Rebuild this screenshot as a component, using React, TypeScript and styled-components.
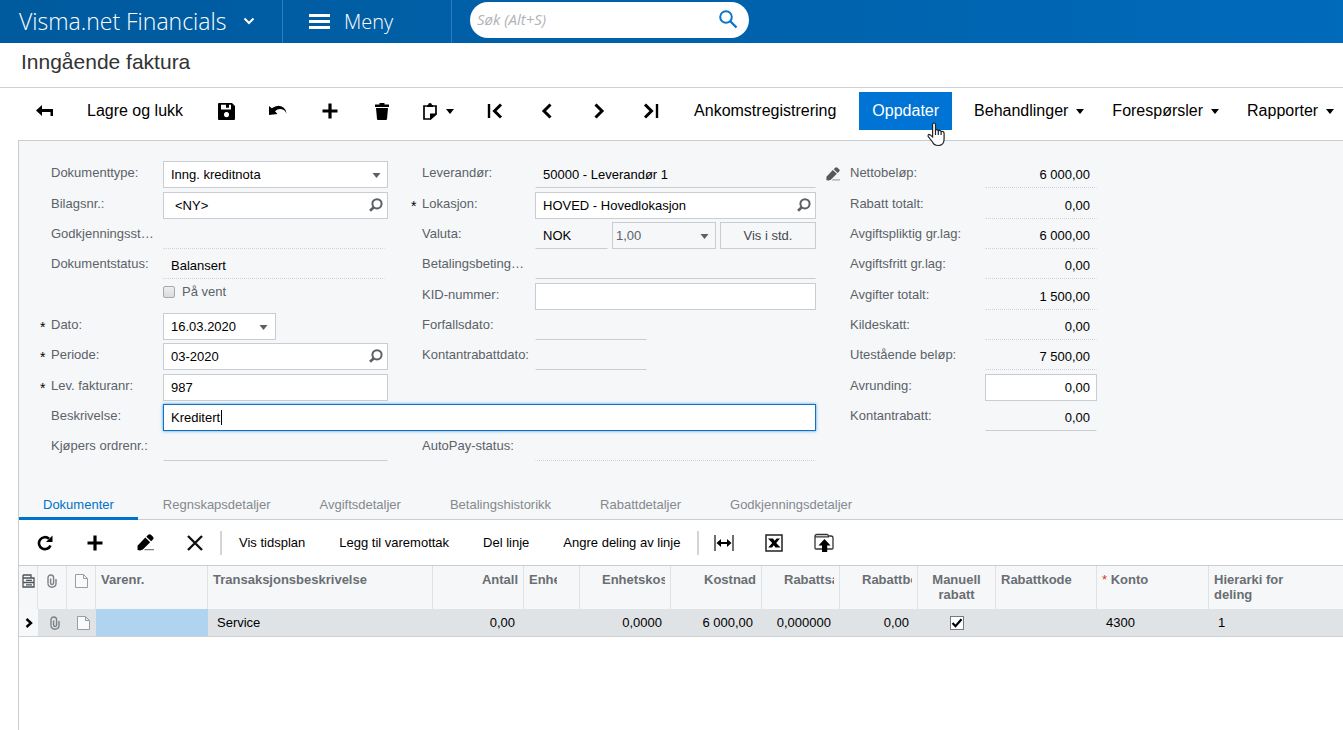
import React from "react";
import styled, { createGlobalStyle, css } from "styled-components";

const GlobalStyle = createGlobalStyle`
  *, *::before, *::after { box-sizing: border-box; }
  body {
    margin: 0;
    background: #fff;
    color: #000;
    font: 13px/16px "Liberation Sans", Arial, sans-serif;
    overflow: hidden;
  }
  button, input, select { font: inherit; color: inherit; margin: 0; border-radius: 0; }
  button { background: none; border: 0; padding: 0; white-space: nowrap; }
  svg { display: block; flex: none; }
`;

const Page = styled.div`
  min-height: 100vh;
  display: flex;
  flex-direction: column;
`;

/* ---------- top bar ---------- */

const TopBar = styled.header`
  height: 43px;
  flex: none;
  display: flex;
  align-items: stretch;
  background: linear-gradient(90deg, #005a9e, #0061aa 50%, #006abb);
  color: #fff;
  font-family: "Open Sans", sans-serif;
  font-weight: 300;
`;

const BrandButton = styled.button`
  width: 283px;
  padding: 0 27px 2px 19px;
  display: flex;
  align-items: center;
  justify-content: space-between;
  border-right: 1px solid #2b7dbd;
  font-size: 23px;
`;

const MenuButton = styled.button`
  width: 169px;
  padding: 0 0 0 26px;
  display: flex;
  align-items: center;
  gap: 14px;
  border-right: 1px solid #2b7dbd;
  font-size: 20px;
`;

const SearchBox = styled.div`
  width: 279px;
  height: 36px;
  margin: 2px 0 0 18px;
  padding: 0 11px 2px 7px;
  display: flex;
  align-items: center;
  background: #fff;
  border-radius: 18px;
  color: #0a73cf;
`;

const SearchInput = styled.input`
  flex: 1;
  min-width: 0;
  border: 0;
  outline: 0;
  padding: 0;
  background: none;
  font: italic 400 15px/20px "Open Sans", sans-serif;
  &::placeholder { color: #b0b3b7; opacity: 1; }
`;

const PageTitle = styled.h1`
  margin: 0;
  height: 45px;
  flex: none;
  padding: 0 21px 6px;
  border-bottom: 1px solid #cfd1d4;
  display: flex;
  align-items: center;
  font-size: 21px;
  font-weight: 400;
  color: #333;
`;

/* ---------- main toolbar ---------- */

const Toolbar = styled.div`
  height: 52px;
  flex: none;
  padding: 0 0 6px 18px;
  display: flex;
  align-items: center;
  font-size: 16px;
`;

const ToolIcon = styled.button<{ $wide?: boolean }>`
  width: ${(p) => (p.$wide ? 61 : 52)}px;
  height: 38px;
  flex: none;
  display: flex;
  align-items: center;
  justify-content: center;
  gap: 9px;
`;

const ToolText = styled.button<{ $active?: boolean }>`
  position: relative;
  height: 38px;
  padding: 0 ${(p) => (p.$active ? 13 : 17)}px;
  ${(p) =>
    p.$active &&
    css`
      margin: 0 8px 0 6px;
      background: #0074d4;
      color: #fff;
    `}
`;

const ToolMenu = styled.button`
  height: 38px;
  padding: 0 14px;
  display: flex;
  align-items: center;
  gap: 8px;
`;

const Pointer = styled.svg`
  position: absolute;
  left: 68px;
  top: 30px;
  z-index: 2;
`;

/* ---------- form ---------- */

const Workspace = styled.main`
  flex: 1;
  margin-left: 18px;
  border: solid #c9ccd0;
  border-width: 1px 0 0 1px;
  display: flex;
  flex-direction: column;
`;

const Form = styled.form`
  flex: none;
  padding: 20px 0 23px 16px;
  background: #f5f7f9;
  display: grid;
  grid-template-columns: 128px 225px 18px 129px 281px 34px 135px 112px;
  grid-template-rows: repeat(3, 31px 30px 30px) 31px;
  align-items: start;
`;

const FieldLabel = styled.label<{ $col: number; $row: number; $plain?: boolean }>`
  grid-column: ${(p) => p.$col};
  grid-row: ${(p) => p.$row};
  padding-left: ${(p) => (p.$plain ? 0 : 16)}px;
  padding-right: 4px;
  position: relative;
  line-height: 24px;
  color: #5c6268;
  white-space: nowrap;
`;

const Clip = styled.span`
  display: block;
  overflow: hidden;
  text-overflow: ellipsis;
`;

const Required = styled.span`
  position: absolute;
  left: 5px;
  top: 2px;
  color: #000;
  font-size: 14px;
`;

const Slot = styled.div<{ $col: number; $row: number; $span?: number; $w?: number }>`
  grid-column: ${(p) => p.$col} / span ${(p) => p.$span || 1};
  grid-row: ${(p) => p.$row};
  position: relative;
  display: flex;
  width: ${(p) => (p.$w ? p.$w + "px" : "100%")};
`;

type Look = "box" | "line" | "dots" | "focus";

const looks = {
  box: css`
    background: #fff;
    border: 1px solid #c9cdd1;
  `,
  line: css`
    background: none;
    border: 1px solid transparent;
    border-bottom-color: #c9cdd1;
  `,
  dots: css`
    background: none;
    border: 1px solid transparent;
    border-bottom: 1px dotted #cfd3d7;
  `,
  focus: css`
    background: #fff;
    border: 1px solid #1270bf;
    box-shadow: 0 0 3px #3d9fe6;
  `,
};

const TextInput = styled.input<{ $look: Look; $right?: boolean; $indent?: boolean }>`
  width: 100%;
  min-width: 0;
  height: 27px;
  outline: 0;
  padding: 0 ${(p) => (p.$right ? 6 : 7)}px 0 ${(p) => (p.$indent ? 11 : 7)}px;
  text-align: ${(p) => (p.$right ? "right" : "left")};
  ${(p) => looks[p.$look]}
`;

const Dropdown = styled.select<{ $muted?: boolean }>`
  width: 100%;
  height: 27px;
  padding: 0 20px 0 ${(p) => (p.$muted ? 3 : 7)}px;
  border: 1px solid #c9cdd1;
  background: ${(p) => (p.$muted ? "#f5f7f9" : "#fff")};
  color: ${(p) => (p.$muted ? "#5c6268" : "#000")};
  appearance: none;
  outline: 0;
`;

const InnerButton = styled.button`
  position: absolute;
  right: 5px;
  top: 6px;
  color: #5c5f63;
`;

const ArrowMark = styled.span`
  position: absolute;
  right: 7px;
  top: 12px;
  color: #5c5f63;
  pointer-events: none;
`;

const DateArrow = styled.button`
  position: absolute;
  right: 8px;
  top: 12px;
  color: #5c5f63;
`;

const Caret = styled.span`
  position: absolute;
  left: 58px;
  top: 6px;
  width: 1px;
  height: 15px;
  background: #000;
`;

const CurrencyRow = styled.div`
  grid-column: 5;
  grid-row: 3;
  display: grid;
  grid-template-columns: 73px 104px 1fr;
  gap: 4px;
`;

const Holder = styled.div`
  position: relative;
`;

const StdButton = styled.button`
  height: 27px;
  border: 1px solid #c9cdd1;
  color: #43484d;
`;

const HoldLabel = styled.label`
  grid-column: 2;
  grid-row: 5;
  display: flex;
  align-items: center;
  gap: 7px;
  height: 17px;
  color: #5c6268;
`;

const HoldBox = styled.input`
  appearance: none;
  width: 12px;
  height: 12px;
  border: 1px solid #a6a9ad;
  border-radius: 2px;
  background: linear-gradient(#eee, #d8dadc);
`;

const EditButton = styled.button`
  grid-column: 6;
  grid-row: 1;
  padding: 6px 0 0 10px;
  color: #55585c;
`;

/* ---------- tabs and grid toolbar ---------- */

const Tabs = styled.div`
  flex: none;
  height: 32px;
  display: flex;
  gap: 1px;
  background: #f5f7f9;
  border-bottom: 1px solid #c9ccd0;
`;

const Tab = styled.button<{ $active?: boolean }>`
  height: 32px;
  padding: 5px 24px 0;
  border-bottom: 3px solid ${(p) => (p.$active ? "#0072c8" : "transparent")};
  color: ${(p) => (p.$active ? "#0072c8" : "#85898d")};
`;

const GridBar = styled.div`
  flex: none;
  height: 45px;
  padding-left: 1px;
  display: flex;
  align-items: center;
`;

const GridIcon = styled.button`
  width: 50px;
  height: 30px;
  flex: none;
  display: flex;
  align-items: center;
  justify-content: center;
`;

const GridText = styled.button`
  height: 30px;
  padding: 0 17px;
`;

const Divider = styled.span`
  width: 2px;
  height: 24px;
  background: #d2d5d8;
`;

/* ---------- table ---------- */

const Table = styled.table`
  width: 100%;
  min-width: 1300px;
  table-layout: fixed;
  border-collapse: separate;
  border-spacing: 0;
  border-top: 1px solid #c9ccd0;
`;

type Align = "left" | "right" | "center";

const Th = styled.th<{ $align?: Align; $icon?: boolean; $inset?: Align }>`
  height: 43px;
  padding: ${(p) => (p.$icon ? "8px 0 0" : "6px 5px 0")};
  ${(p) => p.$inset === "left" && "padding-left: 22px;"}
  ${(p) => p.$inset === "right" && "padding-right: 22px;"}
  vertical-align: top;
  text-align: ${(p) => p.$align || "left"};
  line-height: 15px;
  background: #f5f7f9;
  border-right: 1px solid #dfe2e5;
  color: #6a6e72;
  &:last-child { border-right: 0; }
`;

const HeadText = styled.span`
  display: block;
  overflow: hidden;
  white-space: nowrap;
`;

const Star = styled.span`
  color: #e2352b;
  font-weight: 400;
`;

const Td = styled.td<{ $align?: Align; $tone?: "plain" | "selected"; $icon?: boolean }>`
  height: 28px;
  padding: ${(p) => (p.$icon ? "0" : "0 9px")};
  text-align: ${(p) => p.$align || "left"};
  white-space: nowrap;
  background: ${(p) =>
    p.$tone === "selected" ? "#b0d4f0" : p.$tone === "plain" ? "#f7f8fa" : "#dfe3e6"};
  border-bottom: 1px solid #cfd2d5;
`;

const CellIcon = styled.span<{ $row?: boolean }>`
  display: flex;
  justify-content: center;
  padding-left: ${(p) => (p.$row ? 4 : 0)}px;
`;

const RowCheck = styled.input`
  appearance: none;
  display: block;
  width: 14px;
  height: 14px;
  margin: 0 auto;
  border: 1px solid #75787c;
  background: #fff
    url("data:image/svg+xml,%3Csvg xmlns='http://www.w3.org/2000/svg' viewBox='0 0 12 12'%3E%3Cpath d='M1.500 6l3 3.200 6-7' fill='none' stroke='%23000' stroke-width='2.200'/%3E%3C/svg%3E");
`;

/* ---------- icons ---------- */

const Down = ({ w = 8 }: { w?: number }) => (
  <svg width={w} height="5" viewBox="0 0 8 5" fill="currentColor"><path d="M0 0h8L4 5z" /></svg>
);

const Lens = () => (
  <svg width="14" height="14" viewBox="0 0 14 14" fill="none" stroke="currentColor">
    <circle cx="8" cy="5.8" r="4.6" strokeWidth="2" />
    <path d="M4.800 9.200L1 12.800" strokeWidth="2.6" />
  </svg>
);

const Pencil = ({ size = 14 }: { size?: number }) => (
  <svg width={size} height={size} viewBox="0 0 16 16" fill="currentColor">
    <path d="M.5 15V11L7.800 3.400l4.600 4.400L5.500 14.500 3 15.500z M8.800 2.500L10.500.8q1.300-1.200 2.600 0l1.900 1.900q1.200 1.200 0 2.500L13.300 6.900z" />
    <path d="M7.500 14h8.500v1.400H6.500z" opacity=".5" />
  </svg>
);

const Plus = () => (
  <svg width="16" height="16" viewBox="0 0 16 16"><path d="M8 .5v15M.5 8h15" stroke="#000" strokeWidth="3.200" /></svg>
);

const Clipper = () => (
  <svg width="10" height="14" viewBox="0 0 10 14" fill="none" stroke="#7d8186">
    <path d="M1 9.500V3.800a2.800 2.800 0 0 1 5.600 0V9a1.500 1.500 0 0 1-3 0V4.500" strokeWidth="1.400" />
    <path d="M1 9.500A3.600 3.600 0 0 0 4.600 13.200Q9 13.200 9 9.500V5" strokeWidth="1.400" />
  </svg>
);

const Sheet = () => (
  <svg width="13" height="14" viewBox="0 0 13 14" fill="#fafafa" stroke="#9a9ea2">
    <path d="M.5.5h8l4 4v9H.5zM8.500.5v4h4" />
  </svg>
);

const Chevron = ({ flip, bar }: { flip?: boolean; bar?: boolean }) => (
  <svg width="16" height="16" viewBox="0 0 16 16" fill="none" stroke="#000" strokeWidth="3">
    <g transform={flip ? "translate(16 0) scale(-1 1)" : undefined}>
      {bar && <path d="M2 1v14" strokeWidth="2.400" />}
      <path d={bar ? "M14 1.500L7.500 8l6.500 6.500" : "M11.500 1.500L5 8l6.500 6.500"} />
    </g>
  </svg>
);

/* ---------- data ---------- */

const totals: [string, string, Look][] = [
  ["Nettobeløp:", "6 000,00", "dots"],
  ["Rabatt totalt:", "0,00", "dots"],
  ["Avgiftspliktig gr.lag:", "6 000,00", "dots"],
  ["Avgiftsfritt gr.lag:", "0,00", "dots"],
  ["Avgifter totalt:", "1 500,00", "dots"],
  ["Kildeskatt:", "0,00", "dots"],
  ["Utestående beløp:", "7 500,00", "dots"],
  ["Avrunding:", "0,00", "box"],
  ["Kontantrabatt:", "0,00", "line"],
];

const tabs = [
  "Dokumenter",
  "Regnskapsdetaljer",
  "Avgiftsdetaljer",
  "Betalingshistorikk",
  "Rabattdetaljer",
  "Godkjenningsdetaljer",
];

const columnWidths = [19, 29, 29, 112, 225, 91, 56, 91, 91, 78, 78, 78, 101, 112];

type FieldProps = {
  id: string;
  label: string;
  value?: string;
  col: number;
  row: number;
  look: Look;
  required?: boolean;
  lens?: boolean;
  indent?: boolean;
  span?: number;
  w?: number;
  children?: React.ReactNode;
};

const Field = ({ id, label, value = "", col, row, look, required, lens, indent, span, w, children }: FieldProps) => (
  <>
    <FieldLabel htmlFor={id} $col={col} $row={row}>
      {required && <Required>*</Required>}
      <Clip>{label}</Clip>
    </FieldLabel>
    <Slot $col={col + 1} $row={row} $span={span} $w={w}>
      <TextInput
        id={id}
        defaultValue={value}
        readOnly={look === "line" || look === "dots"}
        $look={look}
        $indent={indent}
      />
      {lens && <InnerButton type="button" aria-label={`Søk ${label}`}><Lens /></InnerButton>}
      {children}
    </Slot>
  </>
);

export default function App() {
  return (
    <Page>
      <GlobalStyle />
      <TopBar>
        <BrandButton>
          Visma.net Financials
          <svg width="12" height="8" viewBox="0 0 12 8" fill="none" stroke="#fff" strokeWidth="2"><path d="M1.500 1.500L6 6l4.500-4.500" /></svg>
        </BrandButton>
        <MenuButton>
          <svg width="21" height="15" viewBox="0 0 21 15" fill="#fff"><path d="M0 0h21v3H0zM0 6h21v3H0zM0 12h21v3H0z" /></svg>
          Meny
        </MenuButton>
        <SearchBox>
          <SearchInput type="search" aria-label="Søk" placeholder="Søk (Alt+S)" />
          <button aria-label="Søk">
            <svg width="20" height="20" viewBox="0 0 20 20" fill="none" stroke="currentColor" strokeWidth="2">
              <circle cx="8" cy="8" r="5.800" /><path d="M12 12l6.500 6.500" strokeWidth="2.400" />
            </svg>
          </button>
        </SearchBox>
      </TopBar>

      <PageTitle>Inngående faktura</PageTitle>

      <Toolbar role="toolbar" aria-label="Faktura">
        <ToolIcon aria-label="Tilbake">
          <svg width="17" height="12" viewBox="0 0 17 12"><path d="M0 5.500L6 0v4h11v7h-2.500V7H6v4z" /></svg>
        </ToolIcon>
        <ToolText>Lagre og lukk</ToolText>
        <ToolIcon aria-label="Lagre">
          <svg width="17" height="17" viewBox="0 0 17 17">
            <path fillRule="evenodd" d="M1 0h13l3 3v13q0 1-1 1H1q-1 0-1-1V1q0-1 1-1zM3 1.800v4.700h10V1.800h-2v3H8v-3zM8.500 9a2.600 2.600 0 1 0 .01 0z" />
          </svg>
        </ToolIcon>
        <ToolIcon aria-label="Angre">
          <svg width="18" height="12" viewBox="0 0 18 12"><path d="M0 1l2.800 2.300Q9-1.500 14.500 2.500q3 2.400 3.200 6.500-1.500-4-5-4.700Q9 3.500 6 6.200L8.500 9 0 10z" /></svg>
        </ToolIcon>
        <ToolIcon aria-label="Ny"><Plus /></ToolIcon>
        <ToolIcon aria-label="Slett">
          <svg width="14" height="17" viewBox="0 0 14 17"><path d="M4.500 0h5v1.500H14V4H0V1.500h4.500zM1 5h12l-1 11q-.1 1-1 1H3q-.9 0-1-1z" /></svg>
        </ToolIcon>
        <ToolIcon $wide aria-label="Kopier">
          <svg width="14" height="17" viewBox="0 0 14 17">
            <path d="M3.500 3H1v13h6.500L13 11V3h-2.500" fill="none" stroke="#000" strokeWidth="1.700" />
            <path d="M3.500 4V2H5q.2-2 2-2t2 2h1.500v2zM7 17v-6.500h7z" />
          </svg>
          <Down />
        </ToolIcon>
        <ToolIcon aria-label="Første"><Chevron bar /></ToolIcon>
        <ToolIcon aria-label="Forrige"><Chevron /></ToolIcon>
        <ToolIcon aria-label="Neste"><Chevron flip /></ToolIcon>
        <ToolIcon aria-label="Siste"><Chevron flip bar /></ToolIcon>
        <ToolText>Ankomstregistrering</ToolText>
        <ToolText $active>
          Oppdater
          <Pointer width="18" height="25" viewBox="0 0 18 25" fill="#fff" stroke="#222" strokeWidth="1.200">
            <path d="M5.600 15V2.600Q5.600 1 7 1t1.500 1.600V8q1.400-1 2.800.6 1.400-.8 2.800.8 3-.4 3 2.300V17q0 6.500-6 6.500-4 0-5.600-3.500L1.200 14.500q-.6-3 2-1.600z" />
            <path d="M8.500 8v5M11.300 8.600v4.400M14.100 9.400V13" />
          </Pointer>
        </ToolText>
        <ToolMenu>Behandlinger <Down /></ToolMenu>
        <ToolMenu>Forespørsler <Down /></ToolMenu>
        <ToolMenu>Rapporter <Down /></ToolMenu>
      </Toolbar>

      <Workspace>
        <Form>
          <FieldLabel htmlFor="type" $col={1} $row={1}>Dokumenttype:</FieldLabel>
          <Slot $col={2} $row={1}>
            <Dropdown id="type"><option>Inng. kreditnota</option></Dropdown>
            <ArrowMark><Down w={9} /></ArrowMark>
          </Slot>
          <Field id="nr" label="Bilagsnr.:" value="<NY>" col={1} row={2} look="box" lens indent />
          <Field id="godkj" label="Godkjenningsstatus:" col={1} row={3} look="dots" w={222} />
          <Field id="status" label="Dokumentstatus:" value="Balansert" col={1} row={4} look="dots" w={222} />
          <HoldLabel><HoldBox type="checkbox" />På vent</HoldLabel>
          <Field id="dato" label="Dato:" value="16.03.2020" col={1} row={6} look="box" required w={113}>
            <DateArrow type="button" aria-label="Velg dato"><Down w={9} /></DateArrow>
          </Field>
          <Field id="periode" label="Periode:" value="03-2020" col={1} row={7} look="box" required lens />
          <Field id="lev" label="Lev. fakturanr:" value="987" col={1} row={8} look="box" required />
          <Field id="beskr" label="Beskrivelse:" value="Kreditert" col={1} row={9} look="focus" span={4}>
            <Caret />
          </Field>
          <Field id="ordre" label="Kjøpers ordrenr.:" col={1} row={10} look="line" />

          <Field id="leverandor" label="Leverandør:" value="50000 - Leverandør 1" col={4} row={1} look="line" />
          <EditButton type="button" aria-label="Rediger leverandør"><Pencil /></EditButton>
          <Field id="lokasjon" label="Lokasjon:" value="HOVED - Hovedlokasjon" col={4} row={2} look="box" required lens />
          <FieldLabel htmlFor="valuta" $col={4} $row={3}>Valuta:</FieldLabel>
          <CurrencyRow>
            <TextInput id="valuta" defaultValue="NOK" readOnly $look="line" />
            <Holder>
              <Dropdown $muted aria-label="Kurs"><option>1,00</option></Dropdown>
              <ArrowMark><Down w={9} /></ArrowMark>
            </Holder>
            <StdButton type="button">Vis i std.</StdButton>
          </CurrencyRow>
          <Field id="bet" label="Betalingsbetingelser:" col={4} row={4} look="line" />
          <Field id="kid" label="KID-nummer:" col={4} row={5} look="box" />
          <Field id="forfall" label="Forfallsdato:" col={4} row={6} look="line" w={112} />
          <Field id="rabattdato" label="Kontantrabattdato:" col={4} row={7} look="line" w={112} />
          <Field id="autopay" label="AutoPay-status:" col={4} row={10} look="dots" />

          {totals.map(([label, value, look], i) => (
            <React.Fragment key={label}>
              <FieldLabel htmlFor={`sum${i}`} $col={7} $row={i + 1} $plain>{label}</FieldLabel>
              <Slot $col={8} $row={i + 1}>
                <TextInput id={`sum${i}`} defaultValue={value} readOnly={look !== "box"} $look={look} $right />
              </Slot>
            </React.Fragment>
          ))}
        </Form>

        <Tabs role="tablist">
          {tabs.map((name, i) => (
            <Tab key={name} role="tab" aria-selected={i === 0} $active={i === 0}>{name}</Tab>
          ))}
        </Tabs>

        <GridBar role="toolbar" aria-label="Linjer">
          <GridIcon aria-label="Oppdater linjer">
            <svg width="16" height="16" viewBox="0 0 16 16">
              <path d="M13.500 10.500A6 6 0 1 1 12 3.700" fill="none" stroke="#000" strokeWidth="2.600" />
              <path d="M15.500.5V7H9z" />
            </svg>
          </GridIcon>
          <GridIcon aria-label="Ny linje"><Plus /></GridIcon>
          <GridIcon aria-label="Rediger linje"><Pencil size={17} /></GridIcon>
          <GridIcon aria-label="Slett linje">
            <svg width="16" height="16" viewBox="0 0 16 16"><path d="M1 1l14 14M15 1L1 15" stroke="#111" strokeWidth="2.400" /></svg>
          </GridIcon>
          <Divider />
          <GridText>Vis tidsplan</GridText>
          <GridText>Legg til varemottak</GridText>
          <GridText>Del linje</GridText>
          <GridText>Angre deling av linje</GridText>
          <Divider />
          <GridIcon aria-label="Tilpass bredde">
            <svg width="20" height="16" viewBox="0 0 20 16">
              <path d="M1 0v16M19 0v16" stroke="#333" strokeWidth="1.400" />
              <path d="M2.500 8L7 4v3h6V4l4.500 4-4.500 4V9H7v3z" />
            </svg>
          </GridIcon>
          <GridIcon aria-label="Eksporter til Excel">
            <svg width="18" height="18" viewBox="0 0 18 18">
              <path d="M1 1h16v16H1z" fill="#fff" stroke="#222" strokeWidth="1.500" />
              <path d="M3 4.500h5L9.700 6.800l1.800-2.300H15L11.200 9l4.300 4.500h-5L8.800 11.200 7 13.500H3.200L7.200 9z" />
            </svg>
          </GridIcon>
          <GridIcon aria-label="Last opp">
            <svg width="20" height="19" viewBox="0 0 20 19">
              <path d="M1 15V3.500Q1 1.500 3 1.500h10q1 0 1.500 1.500H17q2 0 2 2V15q0 1-1 1H2q-1 0-1-1zM1 3.800h14" fill="#fff" stroke="#333" strokeWidth="1.300" />
              <path d="M10.500 6l6 6.500h-3.300V19H8v-6.500H4.500z" />
            </svg>
          </GridIcon>
        </GridBar>

        <Table>
          <colgroup>
            {columnWidths.map((w, i) => <col key={i} width={w} />)}
            <col />
          </colgroup>
          <thead>
            <tr>
              <Th $icon aria-label="Kolonner">
                <CellIcon>
                  <svg width="13" height="14" viewBox="0 0 13 14" fill="none" stroke="#4d5358" strokeWidth="1.300">
                    <path d="M1 1h8v3M1 1v12h11V4H1M1 8.500h11M4 6.300h6M4 10.800h6" />
                  </svg>
                </CellIcon>
              </Th>
              <Th $icon aria-label="Vedlegg"><CellIcon><Clipper /></CellIcon></Th>
              <Th $icon aria-label="Notat"><CellIcon><Sheet /></CellIcon></Th>
              <Th>Varenr.</Th>
              <Th>Transaksjonsbeskrivelse</Th>
              <Th $align="right">Antall</Th>
              <Th $inset="right"><HeadText>Enhet</HeadText></Th>
              <Th $inset="left"><HeadText>Enhetskost</HeadText></Th>
              <Th $align="right">Kostnad</Th>
              <Th $inset="left"><HeadText>Rabattsats</HeadText></Th>
              <Th $inset="left"><HeadText>Rabattbeløp</HeadText></Th>
              <Th $align="center">Manuell rabatt</Th>
              <Th>Rabattkode</Th>
              <Th><Star>*</Star> Konto</Th>
              <Th>Hierarki for<br />deling</Th>
            </tr>
          </thead>
          <tbody>
            <tr>
              <Td $icon $tone="plain">
                <CellIcon><svg width="8" height="10" viewBox="0 0 8 10"><path d="M1.500 1L6 5 1.500 9" fill="none" stroke="#000" strokeWidth="2.400" /></svg></CellIcon>
              </Td>
              <Td $icon><CellIcon $row><Clipper /></CellIcon></Td>
              <Td $icon><CellIcon $row><Sheet /></CellIcon></Td>
              <Td $tone="selected" />
              <Td>Service</Td>
              <Td $align="right">0,00</Td>
              <Td />
              <Td $align="right">0,0000</Td>
              <Td $align="right">6 000,00</Td>
              <Td $align="right">0,000000</Td>
              <Td $align="right">0,00</Td>
              <Td><RowCheck type="checkbox" defaultChecked aria-label="Manuell rabatt" /></Td>
              <Td />
              <Td>4300</Td>
              <Td>1</Td>
            </tr>
          </tbody>
        </Table>
      </Workspace>
    </Page>
  );
}
